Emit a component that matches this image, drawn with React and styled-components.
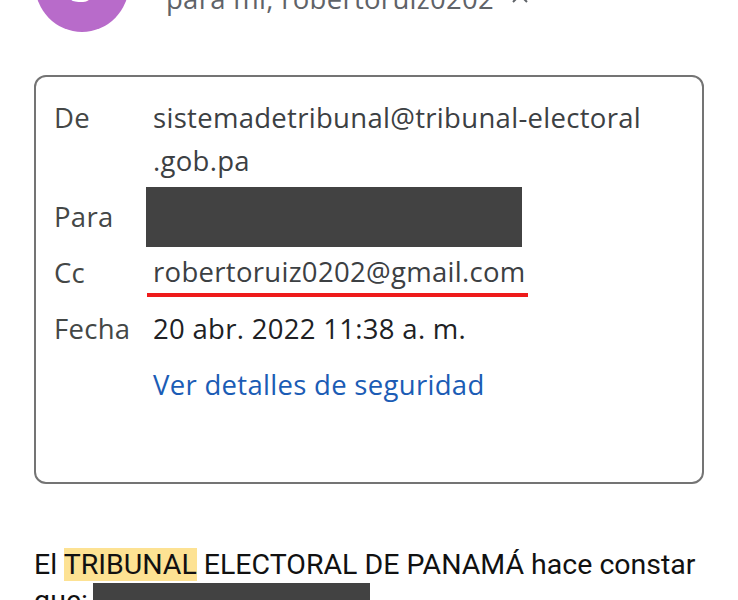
import React from 'react'
import styled, { createGlobalStyle } from 'styled-components'

const colors = {
  avatar: '#b86bca',
  text: '#3c4043',
  dark: '#202124',
  muted: '#5f6368',
  border: '#747474',
  redact: '#424242',
  link: '#1b5cb5',
  red: '#ee1b1b',
  mark: '#fde293',
}

const Global = createGlobalStyle`
  html, body {
    margin: 0;
    padding: 0;
    background: #fff;
    overflow: hidden;
  }
  body {
    font-family: "Open Sans", Roboto, sans-serif;
  }
`

function App() {
  return (
    <Page>
      <Global />
      <Header>
        <Avatar>S</Avatar>
        <Meta>
          <Sender>Sistema de Tribunal</Sender>
          <Recipient>
            para mí, robertoruiz0202
            <Caret viewBox="0 0 24 24">
              <path d="M5 15l7-7 7 7" />
            </Caret>
          </Recipient>
        </Meta>
      </Header>

      <Card>
        <Details>
          <Label>De</Label>
          <Value>
            <span>sistemadetribunal@tribunal-electoral</span>
            <span>.gob.pa</span>
          </Value>

          <Label>Para</Label>
          <Value><Redaction /></Value>

          <Label>Cc</Label>
          <Value><Marked>robertoruiz0202@gmail.com</Marked></Value>

          <Label>Fecha</Label>
          <Value strong>20 abr. 2022 11:38 a. m.</Value>

          <span />
          <Link>Ver detalles de seguridad</Link>
        </Details>
      </Card>

      <Body>
        El <Highlight>TRIBUNAL</Highlight> ELECTORAL DE PANAMÁ hace constar que:<InlineRedaction />
      </Body>
    </Page>
  )
}

export default App

const Page = styled.div`
  width: 738px;
  height: 600px;
  overflow: hidden;
  color: ${colors.text};
`
const Header = styled.div`
  display: flex;
  align-items: flex-start;
  margin-top: -64px;
  padding-left: 35px;
  height: 96px;
`
const Avatar = styled.div`
  flex: none;
  width: 94px;
  height: 96px;
  border-radius: 50%;
  background: ${colors.avatar};
  color: #fff;
  font-size: 46px;
  display: flex;
  align-items: center;
  justify-content: center;
`
const Meta = styled.div`
  margin-left: 37px;
  padding-top: 12px;
  display: flex;
  flex-direction: column;
`
const Sender = styled.div`
  font-size: 28px;
  line-height: 36px;
  color: ${colors.dark};
`
const Recipient = styled.div`
  display: flex;
  align-items: center;
  font-size: 27.5px;
  letter-spacing: 0.3px;
  line-height: 30px;
  color: ${colors.muted};
`
const Caret = styled.svg`
  width: 24px;
  height: 24px;
  margin-left: 14px;
  fill: none;
  stroke: ${colors.muted};
  stroke-width: 2;
`
const Card = styled.div`
  margin: 43px 0 0 34px;
  width: 670px;
  height: 409px;
  box-sizing: border-box;
  border: 2px solid ${colors.border};
  border-radius: 12px;
  padding: 19px 0 0 18px;
`
const Details = styled.div`
  display: grid;
  grid-template-columns: 99px 1fr;
  row-gap: 13px;
  font-size: 27.5px;
  letter-spacing: 0.3px;
  line-height: 43px;
`
const Label = styled.div`
  color: #444746;
`
const Value = styled.div`
  color: ${({ strong }) => (strong ? colors.dark : colors.text)};
  display: flex;
  flex-direction: column;
  align-items: flex-start;
  white-space: nowrap;
`
const Redaction = styled.div`
  width: 376px;
  height: 60px;
  margin: -8px 0 -9px -7px;
  background: ${colors.redact};
`
const Marked = styled.span`
  display: inline-block;
  margin: 0 0 -4px -6px;
  padding: 0 2px 0 6px;
  line-height: 42px;
  border-bottom: 4px solid ${colors.red};
`
const Link = styled.div`
  color: ${colors.link};
`
const Body = styled.p`
  margin: 63px 0 0 34px;
  width: 690px;
  font-family: Roboto, sans-serif;
  font-size: 28.5px;
  line-height: 36px;
  color: #111;
`
const Highlight = styled.span`
  background: ${colors.mark};
`
const InlineRedaction = styled.span`
  display: inline-block;
  width: 277px;
  height: 36px;
  margin-left: 5px;
  vertical-align: top;
  background: ${colors.redact};
`
